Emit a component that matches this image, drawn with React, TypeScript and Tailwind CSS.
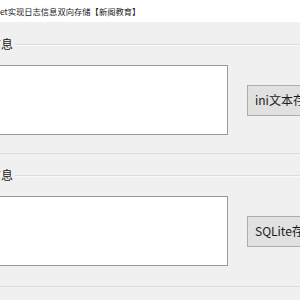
const FONT = { fontFamily: '"Noto Sans CJK SC", "Noto Sans", sans-serif' }

export default function App() {
  return (
    <div className="w-[300px] h-[300px] overflow-hidden bg-[#f0f0f0] text-[#1a1a1a]" style={FONT}>
      <div className="h-[22px] bg-white flex items-center text-[8.3px] leading-none whitespace-nowrap">
        et实现日志信息双向存储【新阁教育】
      </div>

      <div className="flex flex-col gap-[21px] pt-[22px]">
        <LogGroup label="文本信息" button="ini文本存储" height="h-[110px]" />
        <LogGroup label="库信息" button="SQLite存储" height="h-[112px]" />
      </div>
    </div>
  )
}

function LogGroup({ label, button, height }: { label: string; button: string; height: string }) {
  return (
    <div className={`relative ml-[-40px] w-[380px] ${height} border border-[#dcdcdc] shadow-[inset_0_1px_0_#fafafa]`}>
      <span className="absolute right-[calc(100%-54px)] top-[-10px] pr-[2px] bg-[#f0f0f0] text-[12px] leading-[18px] whitespace-nowrap">
        {label}
      </span>
      <div className="flex items-center pt-[20px] pl-[20px]">
        <div className="w-[247px] h-[70px] bg-white border border-[#999999] shrink-0" />
        <button className="ml-[19px] w-[100px] h-[31px] shrink-0 bg-[#e1e1e1] border border-[#adadad] text-[12px] text-left pl-[7px] whitespace-nowrap">
          {button}
        </button>
      </div>
    </div>
  )
}
